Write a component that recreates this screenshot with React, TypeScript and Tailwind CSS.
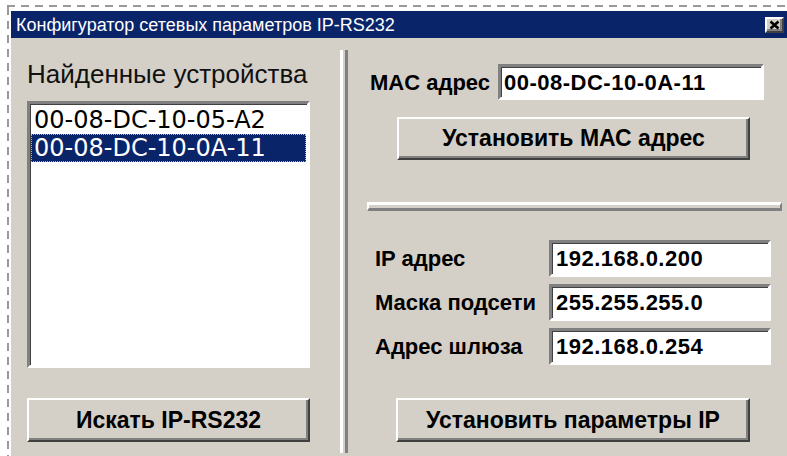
import React from 'react';

const sunken =
  'bg-white border-[3px] border-t-[#808080] border-l-[#808080] border-b-white border-r-white shadow-[inset_1px_1px_0_#404040]';
const raised =
  'bg-[#d4d0c8] border-[2px] border-t-white border-l-white border-b-[#404040] border-r-[#404040] shadow-[inset_-2px_-2px_0_#808080]';

const devices = ['00-08-DC-10-05-A2', '00-08-DC-10-0A-11'];

const ipFields = [
  { label: 'IP адрес', value: '192.168.0.200' },
  { label: 'Маска подсети', value: '255.255.255.0' },
  { label: 'Адрес шлюза', value: '192.168.0.254' },
];

const Button: React.FC<{ children: React.ReactNode; className?: string }> = ({ children, className }) => (
  <button
    className={`${raised} ${className ?? ''} flex items-center justify-center font-['Liberation_Sans',Arial,sans-serif] font-bold text-[23px] text-black`}
  >
    {children}
  </button>
);

const App: React.FC = () => {
  return (
    <div className="w-[787px] h-[456px] bg-white overflow-hidden flex flex-col pt-[5px] pl-[7px]">
      {/* dashed selection frame */}
      <div className="h-[2px] shrink-0 bg-[repeating-linear-gradient(90deg,#9a9a9a_0_8px,transparent_8px_14px)]" />
      <div className="flex flex-1 min-h-0">
        <div className="w-[2px] shrink-0 bg-[repeating-linear-gradient(180deg,#9a9a9a_0_8px,transparent_8px_14px)]" />
        <div className="flex-1 pt-[4px] pl-[2px] flex flex-col min-w-0">
          <div className="flex-1 bg-[#d4d0c8] flex flex-col">
            {/* title bar */}
            <div className="h-[27px] shrink-0 bg-[#0a246a] flex items-center justify-between pl-[5px] pr-[3px]">
              <span className="text-white text-[18px] leading-none font-['Liberation_Sans',Arial,sans-serif] whitespace-nowrap">
                Конфигуратор сетевых параметров IP-RS232
              </span>
              <button className={`${raised} w-[19px] h-[16px] flex items-center justify-center`}>
                <svg width="11" height="10" viewBox="0 0 11 10">
                  <path d="M1.5 1.5 L9.5 8.5 M9.5 1.5 L1.5 8.5" stroke="#000" strokeWidth="2.6" />
                </svg>
              </button>
            </div>

            <div className="flex flex-1">
              {/* device list */}
              <div className="ml-[16px] w-[283px] flex flex-col">
                <div className="mt-[22px] h-[28px] leading-[28px] text-[26px] text-[#111] font-['Liberation_Sans',Arial,sans-serif] whitespace-nowrap">
                  Найденные устройства
                </div>
                <div className={`${sunken} mt-[13px] h-[267px] pt-[2px] px-[1px]`}>
                  {devices.map((d, i) => (
                    <div
                      key={d}
                      className={`h-[28px] pl-[2px] leading-[26px] text-[24px] font-['DejaVu_Sans',sans-serif] ${
                        i === 1
                          ? 'bg-[#0a246a] text-white border border-dotted border-[#c8b46a]'
                          : 'text-black border border-transparent'
                      }`}
                    >
                      {d}
                    </div>
                  ))}
                </div>
                <Button className="mt-[30px] h-[44px] w-[283px]">Искать IP-RS232</Button>
              </div>

              {/* vertical divider */}
              <div className="ml-[30px] mt-[12px] h-[403px] w-[8px] border-l-[3px] border-l-white border-r-[3px] border-r-[#808080]" />

              {/* network settings */}
              <div className="ml-[19px] w-[415px] flex flex-col">
                <div className="mt-[26px] flex items-center">
                  <span className="ml-[3px] w-[128px] text-[22px] font-bold font-['Liberation_Sans',Arial,sans-serif] text-black whitespace-nowrap">
                    MAC адрес
                  </span>
                  <div
                    className={`${sunken} w-[266px] h-[36px] pl-[3px] flex items-center text-[22px] tracking-[0.5px] font-bold font-['Liberation_Sans',Arial,sans-serif] text-black`}
                  >
                    00-08-DC-10-0A-11
                  </div>
                </div>
                <Button className="mt-[17px] ml-[30px] h-[43px] w-[353px]">Установить МАС адрес</Button>

                <div className="mt-[42px] h-[9px] border-t-[3px] border-l-[2px] border-t-white border-l-white border-b-[3px] border-r-[2px] border-b-[#808080] border-r-[#808080]" />

                <div className="mt-[29px] flex flex-col gap-[7px]">
                  {ipFields.map((f) => (
                    <div key={f.label} className="flex items-center">
                      <span className="ml-[8px] w-[174px] text-[22px] font-bold font-['Liberation_Sans',Arial,sans-serif] text-black whitespace-nowrap">
                        {f.label}
                      </span>
                      <div
                        className={`${sunken} w-[222px] h-[37px] pl-[4px] flex items-center text-[22px] tracking-[0.5px] font-bold font-['Liberation_Sans',Arial,sans-serif] text-black`}
                      >
                        {f.value}
                      </div>
                    </div>
                  ))}
                </div>

                <Button className="mt-[33px] ml-[29px] h-[44px] w-[354px]">Установить параметры IP</Button>
              </div>
            </div>
          </div>
        </div>
      </div>
    </div>
  );
};

export default App;
